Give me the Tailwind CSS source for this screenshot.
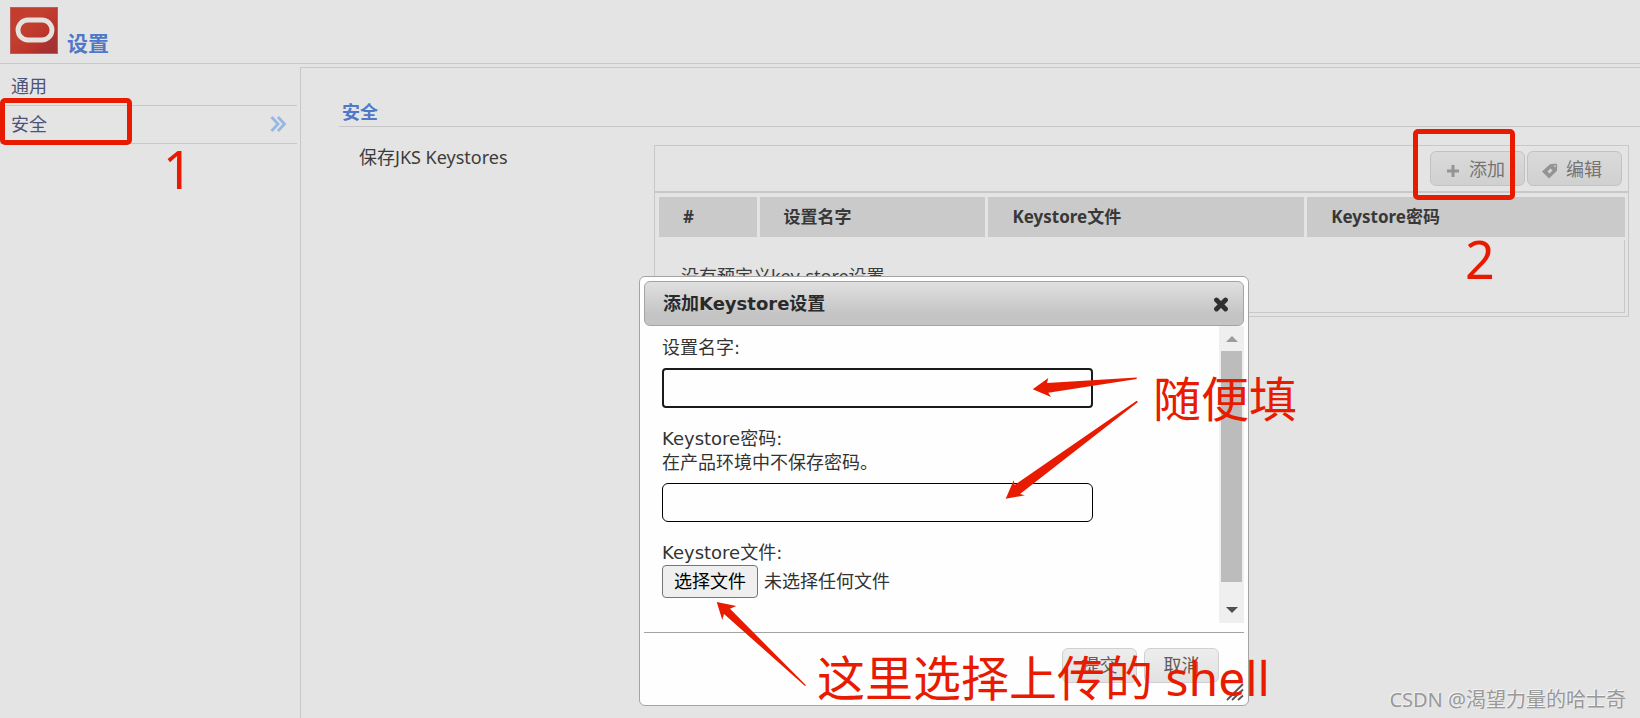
<!DOCTYPE html>
<html lang="zh-CN">
<head>
<meta charset="utf-8">
<title>设置</title>
<script src="https://cdn.jsdelivr.net/npm/@tailwindcss/browser@4"></script>
</head>
<body class="relative flex min-h-screen flex-col overflow-x-hidden bg-[#e4e4e4] font-['Noto_Sans','Noto_Sans_CJK_SC',sans-serif] text-[18px] leading-6 text-[#3c3c3c]">
<header class="flex h-16 items-start gap-[9px] border-b border-[#c8c8c8] pt-[7px] pl-2.5">
  <svg class="h-[47px] w-12" viewBox="0 0 48 47" aria-hidden="true">
    <defs><linearGradient id="logo" x1="0" y1="0" x2="1" y2="1"><stop offset="0" stop-color="#c83a2e"/><stop offset=".4" stop-color="#c0402f"/><stop offset=".65" stop-color="#bc352c"/><stop offset=".8" stop-color="#a83330"/><stop offset="1" stop-color="#a03230"/></linearGradient></defs>
    <rect x=".5" y=".5" width="47" height="46" fill="url(#logo)" stroke="#b9605a"/>
    <rect x="8" y="13" width="34" height="20" rx="10" fill="none" stroke="#e4e2e0" stroke-width="4.800"/>
  </svg>
  <h1 class="pt-6 text-[21px] leading-6 font-bold text-[#5078c8]">设置</h1>
</header>
<div class="flex flex-1">
  <nav class="w-[297px] shrink-0 pt-1 text-[#4d5378]">
    <a href="#general" class="flex h-[38px] items-center border-b border-[#c8c8c8] pb-0.5 pl-[11px]">通用</a>
    <a href="#security" class="flex h-[38px] items-center justify-between border-b border-[#c8c8c8] pr-[11px] pb-0.5 pl-[11px]">安全
      <svg class="h-4 w-4" viewBox="0 0 16 16" fill="none" stroke="#97b8e2" stroke-width="2.800" aria-hidden="true"><path d="M1.500 1 8 8l-6.500 7M8 1l6.500 7L8 15"/></svg>
    </a>
  </nav>
  <main class="mt-[3px] ml-[3px] flex-1 border-t border-l border-[#c8c8c8] pt-8 pl-[38px]">
    <h2 class="border-b border-[#c8c8c8] pb-0.5 pl-[3px] font-bold text-[#5078c8]">安全</h2>
    <div class="flex items-start pt-[18px] pr-[11px] pl-5">
      <div class="w-[295px] shrink-0">保存JKS Keystores</div>
      <section class="flex-1 border border-[#c8c8c8]">
        <div class="flex h-[47px] justify-end gap-0.5 border-b-2 border-[#c8c8c8] pt-[5px] pr-1.5 text-[#747474]">
          <button type="button" class="flex h-[35px] w-[95px] items-center gap-2.5 rounded-md border border-[#c2c2c2] bg-linear-to-b from-[#dadada] to-[#d0d0d0] pl-4">
            <svg class="mt-1 h-3 w-3" viewBox="0 0 12 12" stroke="#949494" stroke-width="3" aria-hidden="true"><path d="M6 0v12M0 6h12"/></svg>添加</button>
          <button type="button" class="flex h-[35px] w-[95px] items-center gap-2 rounded-md border border-[#c2c2c2] bg-linear-to-b from-[#dadada] to-[#d0d0d0] pl-3.5">
            <svg class="mt-1 h-4 w-4" viewBox="0 0 16 16" aria-hidden="true"><path fill="#949494" fill-rule="evenodd" d="M0 8.500 8 1.200 14 .5l1.300 1.200-.3 6L7 15.500ZM5.500 8.500l2 2 3-3-2-2ZM13 2.200a.9.9 0 1 0 .1 0Z"/></svg>编辑</button>
        </div>
        <div class="pt-px pl-px">
          <table class="w-full table-fixed border-separate border-spacing-[3px] text-left">
            <colgroup><col class="w-[10.200%]"><col class="w-[23.600%]"><col class="w-[33%]"><col></colgroup>
            <thead><tr class="h-10 bg-[#cacaca] text-[17px] text-[#383838]"><th class="pl-6">#</th><th class="pl-6">设置名字</th><th class="pl-6">Keystore文件</th><th class="pl-6">Keystore密码</th></tr></thead>
            <tbody><tr><td colspan="4" class="h-[73px] border-r border-b border-[#c8c8c8] pl-[22px]">没有预定义key-store设置</td></tr></tbody>
          </table>
        </div>
      </section>
    </div>
  </main>
</div>

<div role="dialog" aria-labelledby="dlg-title" class="absolute top-[276px] left-[639px] flex h-[430px] w-[610px] flex-col rounded-md border border-[#a4a4a4] bg-[#fefefe] p-1 font-['DejaVu_Sans','Noto_Sans_CJK_SC',sans-serif] text-[18px] text-[#333]">
  <div class="flex h-[45px] shrink-0 items-center justify-between rounded-md border border-[#a4a4a4] bg-linear-to-b from-[#e0e0e0] to-[#c4c4c4] to-75% pr-3.5 pl-[18px]">
    <h2 id="dlg-title" class="font-bold text-[#2a2a2a]">添加Keystore设置</h2>
    <button type="button" aria-label="关闭"><svg class="h-4 w-4" viewBox="0 0 16 16" stroke="#303030" stroke-width="4.800" stroke-linecap="round" aria-hidden="true"><path d="m3.500 4 9 9m0-9-9 9"/></svg></button>
  </div>
  <form class="flex h-[297px] shrink-0">
    <div class="flex-1 pt-2.5 pl-[18px]">
      <label for="name" class="block">设置名字:</label>
      <input id="name" type="text" class="mt-2 block h-10 w-[431px] rounded border-2 border-[#1a1a1a] bg-[#fefefe] px-2 outline-none">
      <label for="pw" class="mt-[19px] block">Keystore密码:<br>在产品环境中不保存密码。</label>
      <input id="pw" type="password" class="mt-2 block h-[39px] w-[431px] rounded-md border border-black bg-[#fefefe] px-2">
      <div class="mt-[19px]">Keystore文件:</div>
      <div class="relative flex items-center gap-1.5">
        <input id="file" type="file" class="sr-only">
        <label for="file" class="flex h-[33px] w-24 items-center justify-center rounded-sm border border-[#767676] bg-[#efefef] text-black">选择文件</label>
        <span>未选择任何文件</span>
      </div>
    </div>
    <div class="flex w-[25px] flex-col items-center bg-[#efefef]" aria-hidden="true">
      <svg class="h-[25px] w-3 shrink-0" viewBox="0 0 12 25"><path d="M0 16h12L6 10Z" fill="#9d9d9d"/></svg>
      <div class="h-[231px] w-[21px] bg-[#bcbcbc]"></div>
      <svg class="mt-auto h-[25px] w-3" viewBox="0 0 12 25"><path d="M0 9h12L6 15Z" fill="#4f4f4f"/></svg>
    </div>
  </form>
  <div class="mt-[9px] flex flex-1 gap-[7px] border-t border-[#a4a4a4] pt-[15px] pl-[418px] text-[#5c5c5c]">
    <button type="button" class="h-[35px] w-[75px] rounded-md border border-[#d0d0d0] bg-linear-to-b from-[#ededed] to-[#e2e2e2]">提交</button>
    <button type="button" class="h-[35px] w-[75px] rounded-md border border-[#d0d0d0] bg-linear-to-b from-[#ededed] to-[#e2e2e2]">取消</button>
  </div>
  <svg class="absolute right-1 bottom-1 h-[18px] w-[18px]" viewBox="0 0 18 18" stroke="#555" stroke-width="1.800" aria-hidden="true"><path d="M1 17 17 1M6 17 17 6.500M12 17l5-4.500"/></svg>
</div>

<div class="pointer-events-none absolute inset-0 overflow-hidden font-['Noto_Sans','Noto_Sans_CJK_SC',sans-serif] text-[48px] leading-[64px] whitespace-nowrap text-[#e81b00]">
  <div class="absolute top-[98px] left-0 h-[47px] w-[132px] rounded-[5px] border-[5px] border-[#e81b00]"></div>
  <div class="absolute top-[129px] left-[1413px] h-[71px] w-[102px] rounded-[5px] border-[5px] border-[#e81b00]"></div>
  <span class="absolute top-[137px] left-[163px] text-[52px]">1</span>
  <span class="absolute top-[227px] left-[1465px] text-[52px]">2</span>
  <span class="absolute top-[367px] left-[1153px]">随便填</span>
  <span class="absolute top-[646px] left-[817px]">这里选择上传的 shell</span>
  <svg class="absolute top-0 left-0 h-[718px] w-[1640px]" viewBox="0 0 1640 718" fill="#e81b00" aria-hidden="true">
    <path d="M1032.700 389.300 1048.300 378 1047 383 1136.700 377.500V379L1048.300 392.700 1051 397Z"/>
    <path d="M1005.700 498.700 1013.700 480.300 1014.700 485 1136.700 400.700 1138 402 1020 494 1025 495.300Z"/>
    <path d="M716.700 602 736.300 606 730 608.700 806 685.300 805 686 724 614 722.300 620Z"/>
  </svg>
  <span class="absolute right-3.5 bottom-1 text-[20px] leading-7 text-[#999] [text-shadow:-1px_-1px_0_#f4f4f4]">CSDN @渴望力量的哈士奇</span>
</div>
</body>
</html>
